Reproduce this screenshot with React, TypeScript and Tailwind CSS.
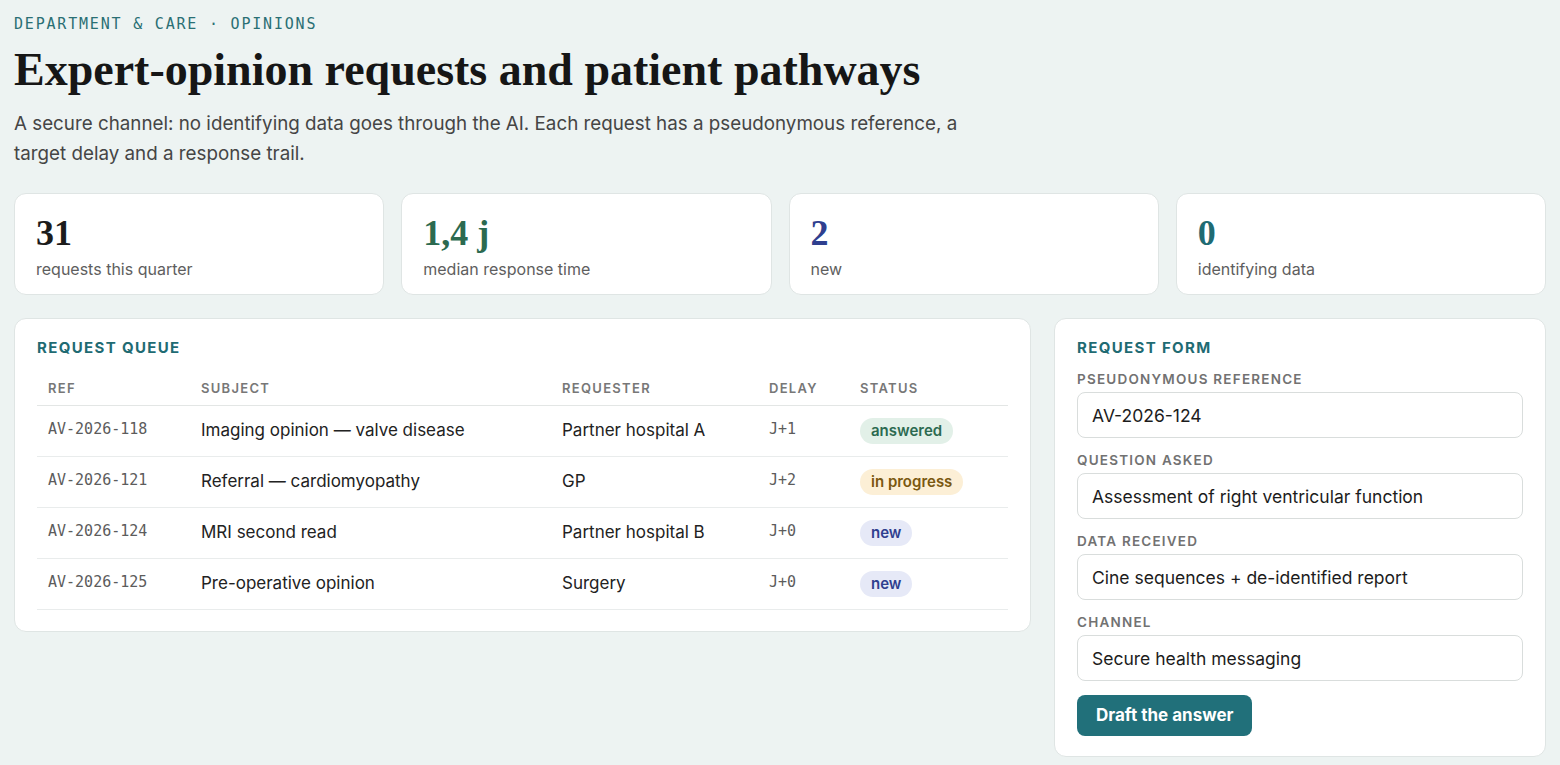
import React from "react";

const serif = "font-['Liberation_Serif','Times_New_Roman',serif]";
const mono = "font-['DejaVu_Sans_Mono','Liberation_Mono',monospace]";

type Stat = { value: string; label: string; color: string };

const stats: Stat[] = [
  { value: "31", label: "requests this quarter", color: "text-[#1c1c1c]" },
  { value: "1,4 j", label: "median response time", color: "text-[#2c6a50]" },
  { value: "2", label: "new", color: "text-[#2f3f8f]" },
  { value: "0", label: "identifying data", color: "text-[#1f6b73]" },
];

type Status = "answered" | "in progress" | "new";

const rows: { ref: string; subject: string; requester: string; delay: string; status: Status }[] = [
  { ref: "AV-2026-118", subject: "Imaging opinion — valve disease", requester: "Partner hospital A", delay: "J+1", status: "answered" },
  { ref: "AV-2026-121", subject: "Referral — cardiomyopathy", requester: "GP", delay: "J+2", status: "in progress" },
  { ref: "AV-2026-124", subject: "MRI second read", requester: "Partner hospital B", delay: "J+0", status: "new" },
  { ref: "AV-2026-125", subject: "Pre-operative opinion", requester: "Surgery", delay: "J+0", status: "new" },
];

const badgeStyles: Record<Status, string> = {
  answered: "bg-[#e2f0e8] text-[#2c6a50]",
  "in progress": "bg-[#fcefd6] text-[#7a5810]",
  new: "bg-[#e6e9f7] text-[#2f3f8f]",
};

const fields = [
  { label: "Pseudonymous reference", value: "AV-2026-124" },
  { label: "Question asked", value: "Assessment of right ventricular function" },
  { label: "Data received", value: "Cine sequences + de-identified report" },
  { label: "Channel", value: "Secure health messaging" },
];

function StatCard({ stat }: { stat: Stat }) {
  return (
    <div className="bg-white border border-[#dfe5e4] rounded-xl px-[21px] pt-[19px] pb-[13px]">
      <div className={`${serif} ${stat.color} font-bold text-[36px] leading-[40px]`}>{stat.value}</div>
      <div className="text-[16px] leading-6 text-[#5e5e5e] mt-[4px]">{stat.label}</div>
    </div>
  );
}

function SectionTitle({ children }: { children: React.ReactNode }) {
  return <h2 className="text-[15px] font-bold uppercase tracking-[0.09em] text-[#1f6b73] leading-5">{children}</h2>;
}

export default function App() {
  return (
    <div className="min-h-screen bg-[#edf3f2] font-['Inter','Liberation_Sans',sans-serif] text-[#1f1f1f] px-[14px] pt-[15px] pb-2">
      {/* Header */}
      <div className={`${mono} text-[15px] font-medium tracking-[0.12em] text-[#2a6f74] leading-[18px]`}>
        DEPARTMENT &amp; CARE · OPINIONS
      </div>
      <h1 className={`${serif} font-bold text-[46px] leading-[56px] text-[#161616] mt-[9px]`}>
        Expert-opinion requests and patient pathways
      </h1>
      <p className="text-[18.8px] leading-[30px] text-[#454545] max-w-[960px] mt-[11px]">
        A secure channel: no identifying data goes through the AI. Each request has a pseudonymous reference, a
        target delay and a response trail.
      </p>

      {/* Stats */}
      <div className="grid grid-cols-4 gap-[17px] mt-[24px]">
        {stats.map((s) => (
          <StatCard key={s.label} stat={s} />
        ))}
      </div>

      <div className="grid grid-cols-[1fr_492px] gap-[23px] mt-[23px] items-start">
        {/* Queue */}
        <section className="bg-white border border-[#dfe5e4] rounded-xl px-[22px] pt-[19px] pb-[21px]">
          <SectionTitle>Request queue</SectionTitle>
          <table className="w-full mt-[13px] border-collapse">
            <thead>
              <tr className="border-b border-[#e3e6e5] text-left text-[13px] uppercase tracking-[0.1em] text-[#777777] leading-[18px]">
                <th className="w-[153px] pl-[11px] py-[8px] font-semibold">Ref</th>
                <th className="w-[361px] pl-[11px] py-[8px] font-semibold">Subject</th>
                <th className="w-[207px] pl-[11px] py-[8px] font-semibold">Requester</th>
                <th className="w-[91px] pl-[11px] py-[8px] font-semibold">Delay</th>
                <th className="pl-[11px] py-[8px] font-semibold">Status</th>
              </tr>
            </thead>
            <tbody>
              {rows.map((r) => (
                <tr key={r.ref} className="border-b border-[#e9ecec] h-[51px]">
                  <td className={`${mono} pl-[11px] text-[15px] text-[#5c5c5c] pb-[4px]`}>{r.ref}</td>
                  <td className="pl-[11px] text-[17px] text-[#222]">{r.subject}</td>
                  <td className="pl-[11px] text-[17px] text-[#222]">{r.requester}</td>
                  <td className={`${mono} pl-[11px] text-[15px] text-[#5c5c5c] pb-[4px]`}>{r.delay}</td>
                  <td className="pl-[11px]">
                    <span className={`inline-block rounded-full px-[11px] py-[3px] text-[15px] font-semibold leading-[20px] ${badgeStyles[r.status]}`}>
                      {r.status}
                    </span>
                  </td>
                </tr>
              ))}
            </tbody>
          </table>
        </section>

        {/* Form */}
        <section className="bg-white border border-[#dfe5e4] rounded-xl px-[22px] pt-[19px] pb-[20px]">
          <SectionTitle>Request form</SectionTitle>
          <div className="mt-[12px]">
            {fields.map((f) => (
              <label key={f.label} className="block mt-[13px] first:mt-0">
                <span className="block text-[13.5px] font-semibold uppercase tracking-[0.09em] text-[#727272] leading-[18px]">
                  {f.label}
                </span>
                <input
                  readOnly
                  value={f.value}
                  className="mt-[4px] block w-full h-[46px] rounded-lg border border-[#d9dddc] bg-white px-[14px] text-[17.5px] text-[#1c1c1c] outline-none"
                />
              </label>
            ))}
          </div>
          <button className="mt-[14px] h-[41px] px-[19px] rounded-lg bg-[#21707a] text-white text-[17px] font-bold">
            Draft the answer
          </button>
        </section>
      </div>
    </div>
  );
}
